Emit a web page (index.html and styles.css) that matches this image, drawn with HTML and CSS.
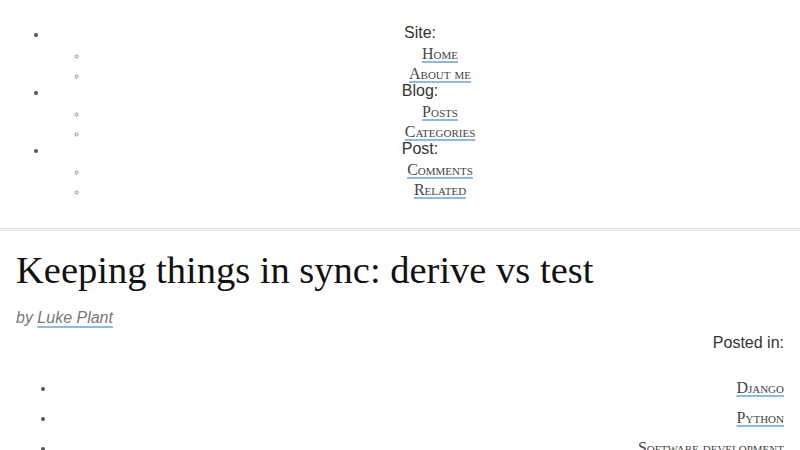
FILE: index.html
```html
<!DOCTYPE html>
<html>
<head>
<meta charset="utf-8">
<link rel="stylesheet" href="styles.css">
</head>
<body>
<header class="site-header">
  <ul class="nav">
    <li class="nav-group">
      <span class="nav-label">Site:</span>
      <ul class="nav-sub">
        <li><a href="#">Home</a></li>
        <li><a href="#">About me</a></li>
      </ul>
    </li>
    <li class="nav-group">
      <span class="nav-label">Blog:</span>
      <ul class="nav-sub">
        <li><a href="#">Posts</a></li>
        <li><a href="#">Categories</a></li>
      </ul>
    </li>
    <li class="nav-group">
      <span class="nav-label">Post:</span>
      <ul class="nav-sub">
        <li><a href="#">Comments</a></li>
        <li><a href="#">Related</a></li>
      </ul>
    </li>
  </ul>
</header>
<main class="content">
  <h1 class="title">Keeping things in sync: derive vs test</h1>
  <p class="byline">by <a href="#">Luke Plant</a></p>
  <p class="posted">Posted in:</p>
  <ul class="cats">
    <li><a href="#">Django</a></li>
    <li><a href="#">Python</a></li>
    <li><a href="#">Software development</a></li>
  </ul>
</main>
</body>
</html>
```
FILE: styles.css
```css
html, body {
  margin: 0;
  padding: 0;
  background: #fff;
}
body {
  font-family: "Liberation Sans", Arial, sans-serif;
  font-size: 16px;
  color: #333;
}
a {
  color: #444;
  font-family: "Liberation Serif", "Times New Roman", serif;
  font-variant: small-caps;
  text-decoration: underline;
  text-decoration-color: #8cb9e7;
  text-decoration-thickness: 2px;
  text-underline-offset: 2px;
}
.site-header {
  padding: 24px 8px 30px;
  border-bottom: 3px double #dcdcdc;
}
.nav {
  margin: 0;
  padding-left: 40px;
  list-style: disc;
  text-align: center;
}
.nav-group {
  line-height: 17.5px;
}
.nav-label {
  display: block;
}
.nav-sub {
  margin: 2px 0 -2px;
  padding-left: 40px;
  list-style: circle;
}
.nav-sub li {
  line-height: 20.25px;
  font-size: 16px;
}
.nav-sub li::marker {
  font-size: 11px;
  color: #888;
}
.nav-group::marker {
  color: #555;
  font-size: 12px;
}
.content {
  padding: 14px 16px 0 16px;
}
.title {
  margin: 0;
  font-family: "Liberation Serif", "Times New Roman", serif;
  font-weight: normal;
  font-size: 38.5px;
  line-height: 50px;
  color: #111;
}
.byline {
  margin: 13px 0 0;
  font-style: italic;
  color: #777;
  line-height: 20px;
}
.byline a {
  font-family: "Liberation Sans", Arial, sans-serif;
  font-variant: normal;
  color: #777;
  text-decoration-thickness: 2px;
  text-underline-offset: 3px;
}
.posted {
  margin: 5px 0 0;
  text-align: right;
  line-height: 20px;
}
.cats {
  margin: 20px 0 0;
  padding-left: 40px;
  text-align: right;
}
.cats li {
  line-height: 30px;
}
.cats li::marker {
  color: #555;
  font-size: 13px;
}
```
